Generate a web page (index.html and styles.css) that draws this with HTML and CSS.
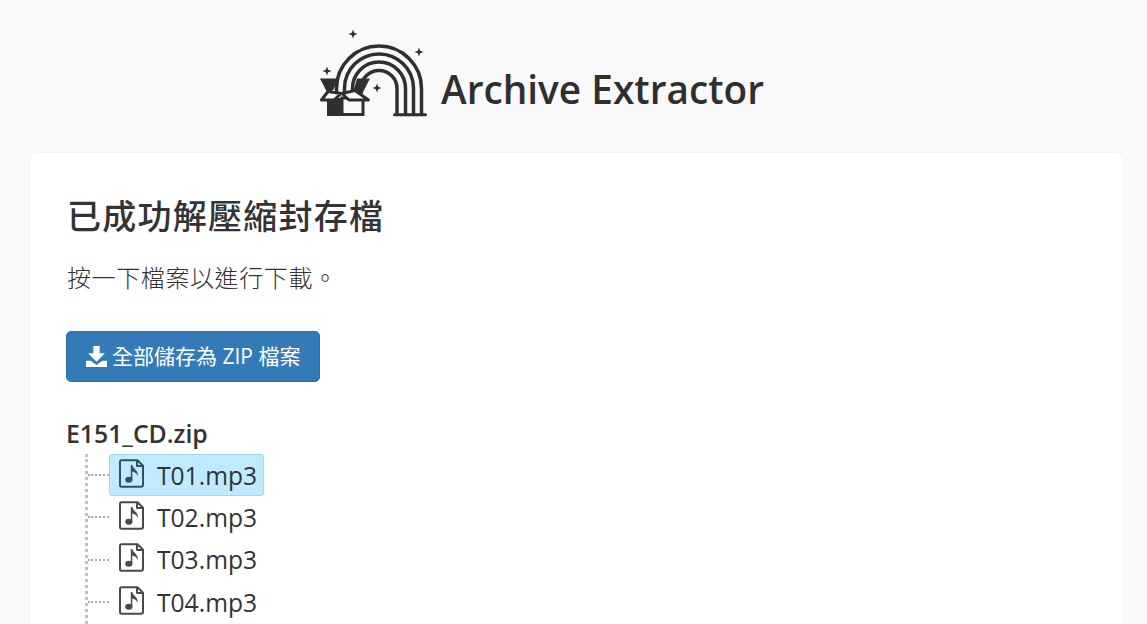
FILE: index.html
```html
<!DOCTYPE html>
<html lang="zh-Hant">
<head>
<meta charset="utf-8">
<title>Archive Extractor</title>
<link rel="stylesheet" href="styles.css">
</head>
<body>
<header class="masthead">
  <svg class="logo" width="108" height="90" viewBox="0 0 108 90" aria-hidden="true">
    <g fill="none" stroke="#2f2f2f" stroke-width="3.500">
      <path d="M16.500 66 V60.500 A42.500 42.500 0 0 1 101.500 60.500 V87"/>
      <path d="M24.500 66 V60.500 A34.500 34.500 0 0 1 93.500 60.500 V87"/>
      <path d="M32.500 66 V60.500 A26.500 26.500 0 0 1 85.500 60.500 V87"/>
      <path d="M41 66 V60.500 A18 18 0 0 1 77 60.500 V87"/>
      <path d="M74.500 86.800 H105.500" stroke-width="3" stroke-linecap="round"/>
    </g>
    <path d="M0 50.500 H17 L14 61 L8 66 Z" fill="#2f2f2f"/>
    <path d="M50 50.500 H37 L34 61 L42 66 Z" fill="#2f2f2f"/>
    <path d="M7 70 H22 V88 H7 Z" fill="#2f2f2f"/>
    <path d="M22 70 H43 V86.500 H22 Z" fill="#f9f9f9" stroke="#2f2f2f" stroke-width="3"/>
    <path d="M1.500 72 L8 63.500 L21 65.500 L14 72 Z" fill="#f9f9f9" stroke="#2f2f2f" stroke-width="3" stroke-linejoin="round"/>
    <path d="M22 65.500 L35 62.500 L48.500 72 L29 72 Z" fill="#f9f9f9" stroke="#2f2f2f" stroke-width="3" stroke-linejoin="round"/>
    <path d="M33 1.500 L34.200 4.800 L37.500 6 L34.200 7.200 L33 10.500 L31.800 7.200 L28.500 6 L31.800 4.800 Z M99 19.500 L100.200 22.800 L103.500 24 L100.200 25.200 L99 28.500 L97.800 25.200 L94.500 24 L97.800 22.800 Z M7 38.500 L8.200 41.800 L11.500 43 L8.200 44.200 L7 47.500 L5.800 44.200 L2.500 43 L5.800 41.800 Z M57 55.500 L58.200 58.800 L61.500 60 L58.200 61.200 L57 64.500 L55.800 61.200 L52.500 60 L55.800 58.800 Z" fill="#2f2f2f"/>
  </svg>
  <span class="brand">Archive Extractor</span>
</header>
<main class="card">
  <h1 class="title">已成功解壓縮封存檔</h1>
  <p class="lead">按一下檔案以進行下載。</p>
  <a class="save" href="#">
    <svg class="save-icon" width="21" height="21" viewBox="0 0 20 20" aria-hidden="true"><path d="M7 0 H13 V7 H18 L10 15 L2 7 H7 Z M0 14 H4.500 L10 18 L15.500 14 H20 V20 H0 Z" fill="#fff"/></svg>
    <span class="save-text">全部儲存為 ZIP 檔案</span>
  </a>
  <div class="root">E151_CD.zip</div>
  <ul class="tree">
    <li class="node"><a class="file selected" href="#"><svg class="file-icon" width="25" height="29" viewBox="0 0 25 29" aria-hidden="true"><use href="#music"/></svg>T01.mp3</a></li>
    <li class="node"><a class="file" href="#"><svg class="file-icon" width="25" height="29" viewBox="0 0 25 29" aria-hidden="true"><use href="#music"/></svg>T02.mp3</a></li>
    <li class="node"><a class="file" href="#"><svg class="file-icon" width="25" height="29" viewBox="0 0 25 29" aria-hidden="true"><use href="#music"/></svg>T03.mp3</a></li>
    <li class="node"><a class="file" href="#"><svg class="file-icon" width="25" height="29" viewBox="0 0 25 29" aria-hidden="true"><use href="#music"/></svg>T04.mp3</a></li>
    <li class="node"></li>
  </ul>
</main>
<svg class="defs" width="0" height="0" aria-hidden="true">
  <symbol id="music" viewBox="0 0 25 29">
    <path d="M2.500 1.200 H18.500 L24 6.800 V26 Q24 27.800 22 27.800 H2.500 Q1 27.800 1 26 V3 Q1 1.200 2.500 1.200 Z M18 1.200 V7 H24" fill="none" stroke="currentColor" stroke-width="2" stroke-linejoin="round"/>
    <ellipse cx="9.800" cy="20.800" rx="3.600" ry="3" fill="currentColor"/>
    <path d="M11.800 21 V6 H13.300 C14 10 19.500 11 18.800 17 C18 14 15.500 13 13.300 12.400 V21 Z" fill="currentColor"/>
  </symbol>
</svg>
</body>
</html>
```

FILE: styles.css
```css
* { box-sizing: border-box; }
html { overflow: hidden; height: 100%; }
body {
  margin: 0;
  background: #f9f9f9;
  color: #333;
  font-family: "Open Sans", "Noto Sans CJK TC", sans-serif;
}
.masthead {
  height: 153px;
  padding: 28px 0 0 320px;
  display: flex;
  align-items: flex-start;
  gap: 13px;
}
.logo { flex: none; }
.brand {
  font-size: 38.800px;
  font-weight: 600;
  line-height: 52px;
  margin-top: 35px;
  color: #2f2f2f;
}
.card {
  margin: 0 24px 0 30px;
  padding: 40px 36px;
  background: #fff;
  border-radius: 8px;
  box-shadow: 0 0 3px rgba(0, 0, 0, .06);
  min-height: 700px;
}
.title {
  margin: 0;
  padding-left: 1px;
  font-size: 34px;
  font-weight: 500;
  line-height: 46px;
  letter-spacing: 1.250px;
}
.lead {
  margin: 23px 0 0;
  padding-left: 1px;
  font-size: 24px;
  font-weight: 300;
  line-height: 32px;
  letter-spacing: .6px;
}
.save {
  display: flex;
  align-items: center;
  gap: 5px;
  margin-top: 37px;
  height: 51px;
  width: 254px;
  padding: 0 10px 0 19px;
  background: #337ab7;
  border: 1px solid #2e6da4;
  border-radius: 5px;
  color: #fff;
  font-size: 21px;
  font-weight: 400;
  text-decoration: none;
}
.save-icon { flex: none; }
.save-text { margin-top: -3px; }
.root {
  margin-top: 34px;
  font-size: 24.800px;
  font-weight: 600;
  line-height: 34px;
}
.tree {
  list-style: none;
  margin: 4px 0 0 19px;
  padding: 0;
  border-left: 3px dotted #c2c2c2;
}
.node {
  height: 42.300px;
  display: flex;
  align-items: center;
}
.node::before {
  content: "";
  flex: none;
  width: 21px;
  border-top: 2px dotted #aaa;
}
.file {
  display: inline-flex;
  align-items: center;
  gap: 13px;
  height: 42px;
  padding: 0 6px 0 9px;
  border: 1px solid transparent;
  border-radius: 3px;
  color: #333;
  font-size: 24.600px;
  text-decoration: none;
}
.file-icon { color: #4a4a4a; flex: none; margin-top: -4px; }
.selected { background: #beebff; border-color: #a3d9ee; }
.selected .file-icon { color: #33505f; }
.defs { position: absolute; }
```
